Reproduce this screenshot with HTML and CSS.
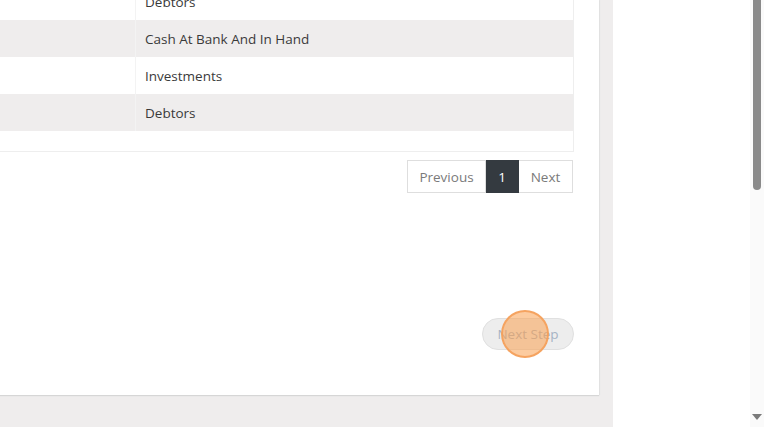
FILE: index.html
```html
<!DOCTYPE html>
<html>
<head>
<meta charset="utf-8">
<link rel="stylesheet" href="styles.css">
</head>
<body>
<div class="app">
  <div class="main">
    <div class="card">
      <div class="table-wrap">
        <table class="tbl">
          <tr><td class="c1"></td><td class="c2">Debtors</td></tr>
          <tr class="alt"><td class="c1"></td><td class="c2">Cash At Bank And In Hand</td></tr>
          <tr><td class="c1"></td><td class="c2">Investments</td></tr>
          <tr class="alt"><td class="c1"></td><td class="c2">Debtors</td></tr>
        </table>
        <div class="tbl-foot"></div>
      </div>
      <div class="pager">
        <span class="pg">Previous</span><span class="pg active">1</span><span class="pg">Next</span>
      </div>
      <div class="spacer"></div>
      <div class="actions">
        <button class="next-step">Next Step</button>
        <span class="click-dot"></span>
      </div>
    </div>
  </div>
  <div class="side"></div>
  <div class="scroll">
    <div class="thumb"></div>
    <div class="track"></div>
    <div class="arrow"></div>
  </div>
</div>
</body>
</html>
```
FILE: styles.css
```css
html, body { margin: 0; padding: 0; }
body { font-family: "Open Sans", "Liberation Sans", sans-serif; color: #3a3a3a; overflow: hidden; }
.app { display: flex; width: 764px; height: 427px; }
.main { width: 613px; height: 427px; background: #efeded; }
.card { width: 599px; height: 395px; background: #fff; box-shadow: 0 1px 1px #d6d6d6, 1px 0 1px #e4e4e4; display: flex; flex-direction: column; box-sizing: border-box; overflow: hidden; }
.table-wrap { width: 574px; margin-top: -17px; border-right: 1px solid #eeeeee; border-bottom: 1px solid #eeeeee; box-sizing: border-box; }
.tbl { border-collapse: collapse; width: 573px; }
.tbl td { height: 37px; padding: 0; font-size: 13.5px; }
.tbl tr.alt td { background: #efeded; }
.c1 { width: 135px; border-right: 1px solid #f3f3f3; }
.c2 { padding-left: 9px !important; }
.tbl-foot { height: 20px; }
.pager { display: flex; justify-content: flex-end; width: 573px; margin-top: 8px; }
.pg { height: 33px; box-sizing: border-box; border: 1px solid #dedede; display: flex; align-items: center; justify-content: center; font-size: 13.5px; color: #7a7a7a; padding: 0 12px; }
.pg + .pg { border-left: none; }
.pg:first-child { width: 79px; }
.pg.active { width: 33px; background: #343a40; color: #fff; border-color: #343a40; }
.pg:last-child { width: 54px; }
.spacer { height: 125px; }
.actions { position: relative; width: 574px; display: flex; justify-content: flex-end; }
.next-step { width: 92px; height: 32px; border-radius: 16px; background: #ededed; border: 1px solid #e0e0e0; color: #a6b3c4; font-family: "Open Sans", "Liberation Sans", sans-serif; font-size: 13.5px; padding: 0; }
.click-dot { position: absolute; left: 501px; top: -8px; width: 48px; height: 48px; box-sizing: border-box; border-radius: 50%; background: rgba(250, 160, 80, 0.55); border: 2px solid rgba(245, 160, 90, 0.9); }
.side { width: 137px; background: #fff; }
.scroll { width: 14px; background: #fafafa; display: flex; flex-direction: column; align-items: center; }
.thumb { width: 8px; height: 190px; background: #8a8a8a; border-radius: 0 0 4px 4px; }
.track { flex: 1; }
.arrow { width: 0; height: 0; border-left: 5px solid transparent; border-right: 5px solid transparent; border-top: 6px solid #7a7a7a; margin-bottom: 7px; }
```
